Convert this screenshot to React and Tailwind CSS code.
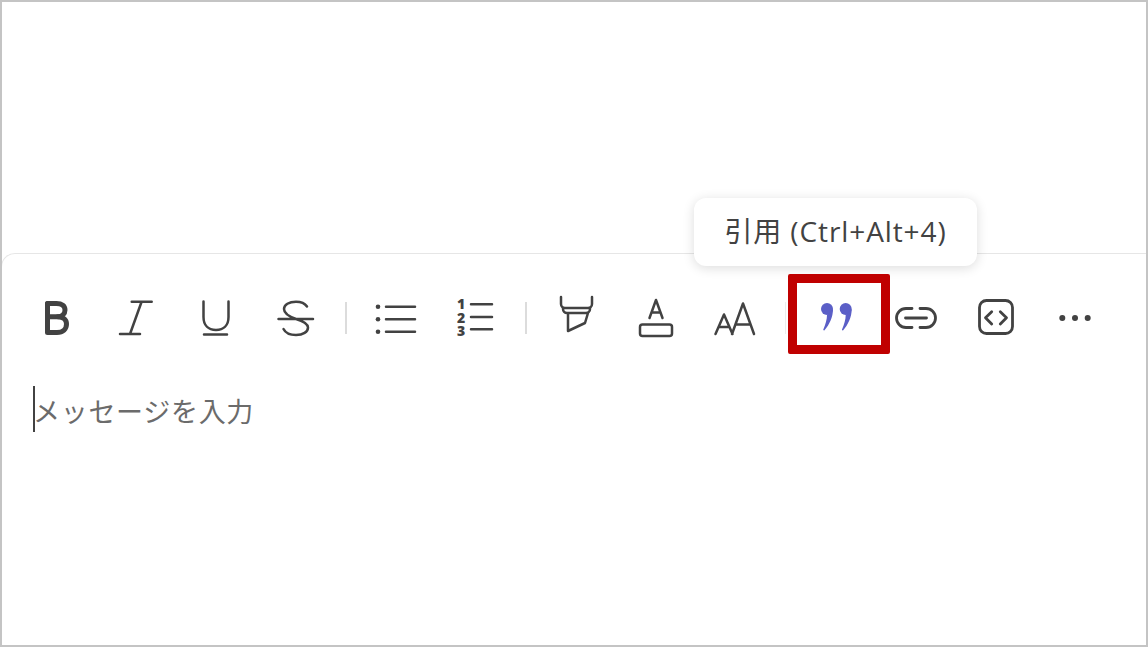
const stroke = "#424242";

function Icon({ children }) {
  return (
    <svg width="40" height="40" viewBox="0 0 40 40" fill="none" stroke={stroke} strokeWidth="2.5" strokeLinecap="round" strokeLinejoin="round" className="overflow-visible">
      {children}
    </svg>
  );
}

function Btn({ children }) {
  return <div className="w-[80px] h-[40px] flex items-center justify-center shrink-0">{children}</div>;
}

function Sep({ faint }) {
  return (
    <div className="w-[20px] h-[40px] flex items-center justify-center shrink-0">
      <div className={faint ? "w-px h-[32px] bg-[#ececec] -ml-[2px]" : "w-[2px] h-[32px] bg-[#dcdcdc] -ml-[1px]"} />
    </div>
  );
}

export default function App() {
  return (
    <div className="w-[1148px] h-[647px] relative overflow-hidden bg-white border-2 border-[#c4c4c4] flex flex-col" style={{ fontFamily: "'Open Sans','Noto Sans CJK JP',sans-serif" }}>
      <div className="h-[251px] shrink-0" />
      <div className="flex-1 rounded-tl-[14px] border-t border-l border-[#e6e6e6] -ml-px pt-[44px] pl-[14px] flex flex-col">
        <div className="flex items-center">
          <Btn>
            <Icon>
              <path d="M11.500 5.500V34.500H21c6 0 9.500-3.500 9.500-8.500 0-4.200-3-7-8.500-7.200H11.500" strokeWidth="5" />
              <path d="M11.500 5.500h9c5.500 0 8.500 2.600 8.500 6.500 0 3.700-2.800 6.500-7 6.800" strokeWidth="5" />
            </Icon>
          </Btn>
          <Btn>
            <Icon>
              <path d="M15.700 3.700h20M4 36h20M25.500 4 14 36" />
            </Icon>
          </Btn>
          <Btn>
            <Icon>
              <path d="M7.500 3.500V19c0 8.500 5 13 12.500 13s12.500-4.500 12.500-13V3.500M8 36.500h23" />
            </Icon>
          </Btn>
          <Btn>
            <Icon>
              <path d="M2.500 21h34.500M31 8.500C29 5.500 25 3.700 20 3.700c-7 0-12 3-12 7.300 0 4.500 5 7.500 12 10 8 2.500 12 4.800 12 8.500 0 4.500-5 7.500-12 7.500-5.500 0-10.500-2-12.500-6" />
            </Icon>
          </Btn>
          <Sep />
          <Btn>
            <Icon>
              <path d="M10 8.700h29M10 21.300h29M10 33.700h29" />
              <circle cx="2" cy="8.700" r="2.300" fill={stroke} stroke="none" />
              <circle cx="2" cy="21.300" r="2.300" fill={stroke} stroke="none" />
              <circle cx="2" cy="33.700" r="2.300" fill={stroke} stroke="none" />
            </Icon>
          </Btn>
          <Btn>
            <Icon>
              <path d="M15 6.300h21M15 19h21M15 31.300h21" />
              <g fill={stroke} stroke="none" fontSize="14" fontWeight="800" fontFamily="'Open Sans',sans-serif" textAnchor="middle">
                <text x="5" y="11">1</text>
                <text x="5" y="24.500">2</text>
                <text x="5" y="38">3</text>
              </g>
            </Icon>
          </Btn>
          <Sep />
          <Btn>
            <Icon>
              <path d="M5-1V6a4 4 0 0 0 4 4H32a4 4 0 0 0 4-4V-1M7 10v1a4 4 0 0 0 4 4H30a4 4 0 0 0 4-4v-1M12 15V33L29 25 32 15" />
            </Icon>
          </Btn>
          <Btn>
            <Icon>
              <path d="M13.500 20 20 2l6.500 18M15.500 14.500h9" />
              <rect x="4" y="26.500" width="32" height="11.500" rx="2.500" />
            </Icon>
          </Btn>
          <Btn>
            <Icon>
              <path d="M-0.500 36 8 16.500 16.500 36M3 29h10M16 36 27 5.500 38 36M20 26.500h14" />
            </Icon>
          </Btn>
          <Sep faint />
          <Btn>
            <svg width="40" height="40" viewBox="0 0 40 40" fill="#5b5fc7" className="overflow-visible">
              <circle cx="11" cy="11" r="6" />
              <circle cx="29.700" cy="11" r="6" />
              <path d="M17 11c0 8-3.500 15.500-8.500 21.300-.5.500-1.500 0-1.200-.7C9.500 26.500 11 21.500 11 17z" />
              <path d="M35.700 11c0 8-3.500 15.500-8.500 21.300-.5.500-1.500 0-1.200-.7 2.200-5.100 3.700-10.100 3.700-14.600z" />
            </svg>
          </Btn>
          <Btn>
            <Icon>
              <path d="M16 10.500H10a9.500 9.500 0 0 0 0 19h6M24 10.500h6a9.500 9.500 0 0 1 0 19h-6M9.500 20h21" strokeWidth="2.800" />
            </Icon>
          </Btn>
          <Btn>
            <Icon>
              <rect x="3.500" y="2.500" width="33" height="33" rx="7" strokeWidth="2.800" />
              <path d="M15.700 13.700 9.500 19.700l6.200 6.300M24.300 13.700l6.200 6-6.200 6.300" strokeWidth="2.800" />
            </Icon>
          </Btn>
          <Btn>
            <svg width="40" height="40" viewBox="0 0 40 40" fill={stroke}>
              <circle cx="6.300" cy="20" r="3" />
              <circle cx="19" cy="20" r="3" />
              <circle cx="31.700" cy="20" r="3" />
            </svg>
          </Btn>
        </div>
        <div className="mt-[48px] ml-[17px] h-[46px] flex items-center">
          <div className="w-[2px] h-[46px] bg-[#424242] shrink-0" />
          <span className="text-[27px] leading-[46px] tracking-[0.7px] text-[#6b6b6b] -ml-[2px] mt-[5px]">メッセージを入力</span>
        </div>
      </div>
      <div className="absolute left-[692px] top-[196px] w-[283px] h-[68px] pb-[3px] rounded-[12px] bg-white shadow-[0_2px_12px_rgba(0,0,0,0.14)] flex items-center justify-center text-[28px] tracking-[0.9px] text-[#424242]">
        引用 (Ctrl+Alt+4)
      </div>
      <div className="absolute left-[786px] top-[272px] w-[102px] h-[80px] border-[9px] border-[#c00000] rounded-[2px]" />
    </div>
  );
}
